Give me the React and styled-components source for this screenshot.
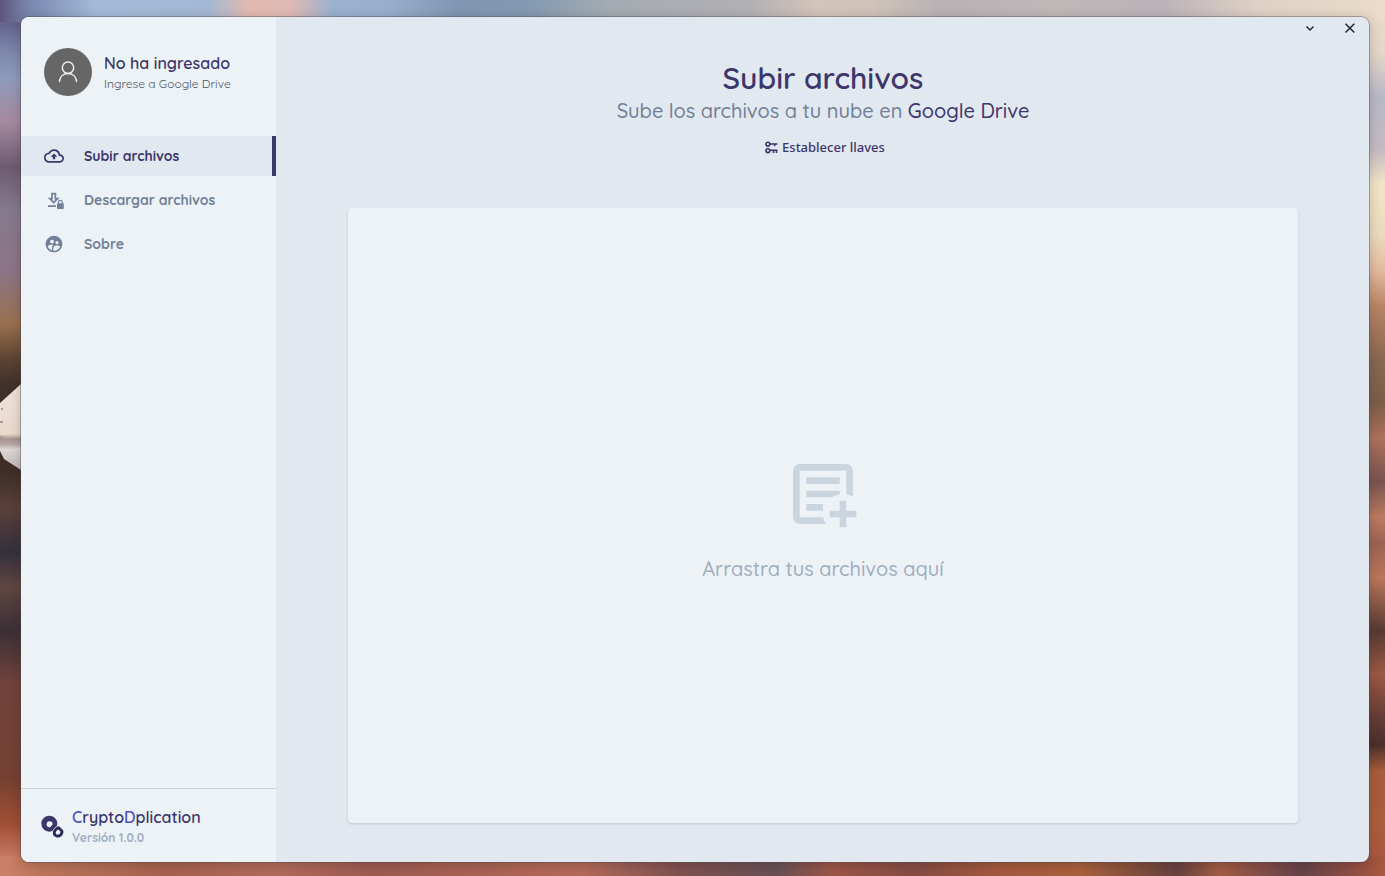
import React from "react";
import styled, { createGlobalStyle } from "styled-components";
import { MdOutlineCloudUpload, MdSupervisedUserCircle } from "react-icons/md";

const ink = "#3c366b";
const slate = "#718096";
const pale = "#edf2f7";
const mist = "#e2e8f0";
const edge = "#cbd5e0";

const GlobalStyle = createGlobalStyle`
  * { box-sizing: border-box; }
  body {
    margin: 0;
    font-family: Quicksand, Lato, "Open Sans", sans-serif;
    color: ${ink};
  }
  h1, p { margin: 0; }
  button { font: inherit; color: inherit; background: none; border: 0; padding: 0; cursor: pointer; }
`;

const Desktop = styled.div`
  display: flex;
  min-height: 100vh;
  padding: 17px 16px 14px 21px;
  background:
    linear-gradient(90deg, #5d557a 0%, #7886ae 2%, #a3bbd8 7%, #a3b8d4 15%, #e2bab1 18%, #dfbab3 21%, #9bb1cf 24%, #99aecc 28%, #7f97b2 33%, #8299b1 38%, #a4abb2 44%, #b2b0b4 54%, #d2c4b9 59%, #cfc3ba 63%, #b8b2b6 68%, #c0b7b8 76%, #bcb3ba 84%, #dfd2c5 91%, #eadcc8 100%) top / 100% 22px no-repeat,
    linear-gradient(90deg, #cd8069 0%, #bb7659 3%, #a5614f 12%, #b06a5b 20%, #9c5a50 27%, #b36a58 42%, #7e514f 49%, #675054 56%, #9b5547 60%, #854c43 66%, #a4583d 72%, #a8603b 78%, #66413e 85%, #a35b44 88%, #66424a 94%, #a9573e 100%) bottom / 100% 20px no-repeat,
    linear-gradient(180deg, #575377 0%, #67668f 3%, #7d89ac 6%, #8f9bbb 9%, #a5899e 14%, #6d5b72 19%, #857b8d 24%, #8d7486 31%, #99704f 37%, #5c4432 41%, #40302a 44%, #3f2e28 54%, #5b403b 58%, #34303c 63%, #604541 67%, #3b3037 72%, #71423b 78%, #764133 89%, #a14e35 94%, #c97b64 98%) left / 24px 100% no-repeat,
    linear-gradient(180deg, #eadcc8 0%, #e4d7c8 6%, #b8b8c6 11%, #c4bbc2 17%, #f2e5c6 21%, #ebdabd 27%, #e2b99b 31%, #b98466 35%, #886851 41%, #7b5e48 46%, #ae725c 50%, #795450 55%, #bc7b61 59%, #9c6354 62%, #ba775a 66%, #563b34 72%, #9c5943 77%, #633c36 82%, #4b302c 85%, #a75c3b 88%, #ac5e3d 94%, #a9573e 98%) right / 20px 100% no-repeat,
    #7e5148;
`;

/* White cliff of the wallpaper that shows beside the window */
const Cliff = styled.svg`
  position: absolute;
  left: 0;
  top: 384px;
  width: 21px;
  height: 86px;
`;

const AppWindow = styled.div`
  position: relative;
  flex: 1;
  display: flex;
  min-width: 0;
  border-radius: 8px;
  overflow: hidden;
  background: ${mist};
  box-shadow: 0 0 0 1px rgba(80, 75, 80, 0.4), 0 2px 12px rgba(30, 20, 25, 0.25);
`;

const Sidebar = styled.aside`
  display: flex;
  flex-direction: column;
  flex: 0 0 255px;
  background: ${pale};
`;

const Account = styled.section`
  display: flex;
  align-items: center;
  gap: 12px;
  height: 119px;
  padding: 0 23px 9px;
`;

const Avatar = styled.div`
  display: grid;
  place-items: center;
  width: 48px;
  height: 48px;
  flex: none;
  border-radius: 50%;
  background: #666;
  color: #eee;
`;

const Labels = styled.div`
  display: flex;
  flex-direction: column;
  gap: 2px;
`;

const Name = styled.p`
  font-size: 16px;
  line-height: 22px;
  font-weight: 600;
`;

const Hint = styled.p`
  font-size: 12px;
  line-height: 16px;
  color: #4a5568;
`;

const Menu = styled.nav`
  display: flex;
  flex-direction: column;
  gap: 4px;
  flex: 1;
`;

const MenuItem = styled.a`
  display: flex;
  align-items: center;
  gap: 20px;
  height: 40px;
  padding-left: 23px;
  font-size: 14px;
  font-weight: 700;
  text-decoration: none;
  color: ${(p) => (p.$active ? ink : slate)};
  background: ${(p) => (p.$active ? mist : "transparent")};
  border-right: 4px solid ${(p) => (p.$active ? ink : "transparent")};
`;

const Brand = styled.footer`
  display: flex;
  align-items: center;
  gap: 8px;
  height: 74px;
  padding: 0 19px;
  border-top: 1px solid ${edge};
`;

const Accent = styled.span`
  color: #4c51bf;
`;

const Version = styled.p`
  font-size: 12px;
  line-height: 16px;
  font-weight: 700;
  color: #a0aec0;
`;

const Main = styled.main`
  flex: 1;
  display: flex;
  flex-direction: column;
  min-width: 0;
  padding: 0 71px 39px 72px;
`;

const WindowControls = styled.div`
  position: absolute;
  top: 0;
  right: 0;
  display: flex;
`;

const ControlButton = styled.button`
  display: grid;
  place-items: center;
  width: 40px;
  height: 22px;
  color: #1a202c;
`;

const Header = styled.header`
  display: flex;
  flex-direction: column;
  align-items: center;
  height: 191px;
  padding-top: 43px;
`;

const Title = styled.h1`
  font-size: 30px;
  line-height: 36px;
  font-weight: 600;
`;

const Subtitle = styled.p`
  font-size: 20px;
  line-height: 30px;
  font-weight: 500;
  color: ${slate};
`;

const Drive = styled.span`
  color: ${ink};
`;

const KeysButton = styled.button`
  display: flex;
  align-items: center;
  gap: 4px;
  margin-top: 12px;
  padding-left: 4px;
  font-family: "Noto Sans", "Open Sans", sans-serif;
  font-size: 13px;
  line-height: 18px;
  font-weight: 500;
`;

const DropZone = styled.section`
  flex: 1;
  display: flex;
  flex-direction: column;
  align-items: center;
  justify-content: center;
  gap: 20px;
  padding-top: 6px;
  border-radius: 4px;
  background: ${pale};
  color: ${edge};
  box-shadow: 0 1px 3px rgba(0, 0, 0, 0.1), 0 1px 2px rgba(0, 0, 0, 0.06);
`;

const DropText = styled.p`
  font-size: 20px;
  line-height: 30px;
  font-weight: 500;
  color: #a0aec0;
`;

const UserIcon = () => (
  <svg width="24" height="24" viewBox="0 0 24 24" fill="none" stroke="currentColor" strokeWidth="1.5" strokeLinecap="round">
    <circle cx="12" cy="7.8" r="5.7" />
    <path d="M3.4 21.4c.5-4.5 3.8-7.9 8.6-7.9s8.1 3.4 8.6 7.9" />
  </svg>
);

const DownloadLockIcon = () => (
  <svg width="20" height="20" viewBox="0 0 20 20" fill="none" stroke="currentColor">
    <path d="M8 3.7h3.4v5h2.2L9.7 12.6 5.800 8.7H8z" strokeWidth="1.7" />
    <path d="M4 16.2h8" strokeWidth="1.7" />
    <rect x="13" y="13.2" width="6.8" height="5.8" rx=".8" fill="currentColor" stroke="none" />
    <path d="M14.5 13.5v-1.3a1.9 1.9 0 0 1 3.8 0v1.3" strokeWidth="1.2" />
  </svg>
);

const KeysIcon = () => (
  <svg width="13" height="13" viewBox="0 0 13 13" fill="none" stroke="currentColor" strokeWidth="1.6">
    <circle cx="2.9" cy="3.2" r="1.9" />
    <path d="M4.8 3h7.7M9.7 3v2.3" />
    <circle cx="2.9" cy="9.7" r="1.9" />
    <path d="M4.8 9.2h7.7M8.5 9.2v2.8M11.5 9.2v2.8" />
  </svg>
);

const TextBoxPlusIcon = () => (
  <svg width="80" height="80" viewBox="0 0 24 24" fill="currentColor">
    <path d="M17 14h2v3h3v2h-3v3h-2v-3h-3v-2h3v-3M5 3h14a2 2 0 0 1 2 2v7.8a6 6 0 0 0-2-.72V5H5v14h7.080c.12.72.37 1.4.72 2H5a2 2 0 0 1-2-2V5a2 2 0 0 1 2-2m2 4h10v2H7V7m0 4h10v1.080a6 6 0 0 0-2.310.92H7v-2m0 4h5v2H7v-2" />
  </svg>
);

const LogoIcon = () => (
  <svg width="24" height="24" viewBox="0 0 24 24">
    <circle cx="9.3" cy="9.7" r="8" fill={ink} />
    <circle cx="9.6" cy="10.2" r="3" fill={pale} />
    <path d="M11.500 11.500l5 5" stroke={ink} strokeWidth="2.4" />
    <path d="M18.6 13.600l3 3.200c.5.5.6 1 .4 1.600-.7 2.600-2.600 3.900-4.800 3.600-2-.3-3.100-1.800-2.900-3.600.2-1.900 1.800-3.500 4.300-4.800z" fill={pale} stroke={pale} strokeWidth="4" strokeLinejoin="round" />
    <path d="M18.600 13.600l3 3.200c.5.5.6 1 .4 1.600-.7 2.600-2.600 3.900-4.800 3.600-2-.3-3.100-1.800-2.900-3.600.2-1.900 1.800-3.500 4.300-4.800z" fill={pale} stroke="#2a2a58" strokeWidth="2.800" strokeLinejoin="round" />
  </svg>
);

export default function App() {
  return (
    <Desktop>
      <GlobalStyle />
      <Cliff viewBox="0 0 21 86" aria-hidden="true">
        <defs>
          <linearGradient id="cliffShade" x1="0" y1="0" x2="0" y2="1">
            <stop offset="0" stopColor="#efe3da" />
            <stop offset=".58" stopColor="#e9d9cd" />
            <stop offset=".64" stopColor="#a39391" />
            <stop offset=".7" stopColor="#b5a8a6" />
            <stop offset=".76" stopColor="#dcd6d5" />
            <stop offset="1" stopColor="#bdb7b8" />
          </linearGradient>
        </defs>
        <path d="M21 0v86L4 75 0 67V19z" fill="url(#cliffShade)" />
        <path d="M0 38h3M0 53h3M1 25h2" stroke="#b8978b" strokeWidth="2" />
      </Cliff>
      <AppWindow>
        <Sidebar>
          <Account>
            <Avatar><UserIcon /></Avatar>
            <Labels>
              <Name>No ha ingresado</Name>
              <Hint>Ingrese a Google Drive</Hint>
            </Labels>
          </Account>
          <Menu>
            <MenuItem href="#subir" $active aria-current="page">
              <MdOutlineCloudUpload size={20} />Subir archivos
            </MenuItem>
            <MenuItem href="#descargar"><DownloadLockIcon />Descargar archivos</MenuItem>
            <MenuItem href="#sobre"><MdSupervisedUserCircle size={20} />Sobre</MenuItem>
          </Menu>
          <Brand>
            <LogoIcon />
            <Labels>
              <Name><Accent>C</Accent>rypto<Accent>D</Accent>plication</Name>
              <Version>Versión 1.0.0</Version>
            </Labels>
          </Brand>
        </Sidebar>
        <Main>
          <Header>
            <Title>Subir archivos</Title>
            <Subtitle>Sube los archivos a tu nube en <Drive>Google Drive</Drive></Subtitle>
            <KeysButton type="button"><KeysIcon />Establecer llaves</KeysButton>
          </Header>
          <DropZone>
            <TextBoxPlusIcon />
            <DropText>Arrastra tus archivos aquí</DropText>
          </DropZone>
        </Main>
        <WindowControls>
          <ControlButton type="button" aria-label="Minimizar">
            <svg width="12" height="12" viewBox="0 0 12 12" fill="none" stroke="currentColor" strokeWidth="1.4"><path d="M3.5 4.5L7 8l3.5-3.5" /></svg>
          </ControlButton>
          <ControlButton type="button" aria-label="Cerrar">
            <svg width="12" height="12" viewBox="0 0 12 12" fill="none" stroke="currentColor" strokeWidth="1.4"><path d="M2.5 1.7l8.8 8.8M11.3 1.7l-8.8 8.8" /></svg>
          </ControlButton>
        </WindowControls>
      </AppWindow>
    </Desktop>
  );
}
